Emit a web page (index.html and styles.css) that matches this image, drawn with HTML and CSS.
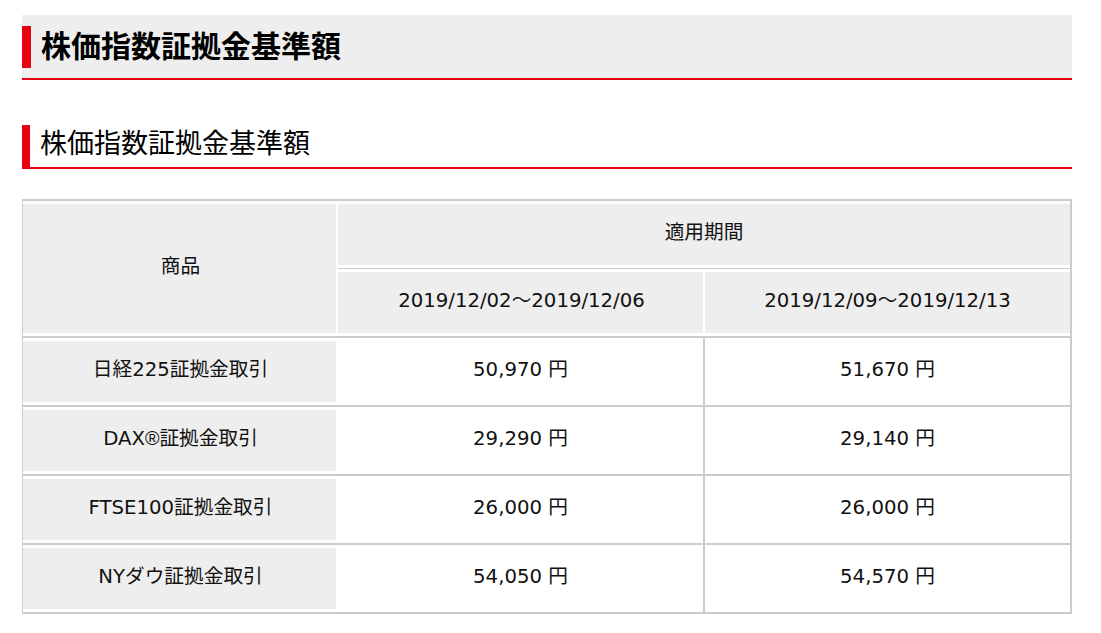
FILE: index.html
```html
<!DOCTYPE html>
<html lang="ja">
<head>
<meta charset="utf-8">
<title>株価指数証拠金基準額</title>
<link rel="stylesheet" href="styles.css">
</head>
<body>
<div class="page">
  <h1 class="title"><span class="title-bar">株価指数証拠金基準額</span></h1>
  <h2 class="subtitle"><span class="subtitle-bar">株価指数証拠金基準額</span></h2>
  <table class="margin-table">
    <colgroup>
      <col class="col-name">
      <col class="col-a">
      <col class="col-b">
    </colgroup>
    <thead>
      <tr class="head-row1">
        <th class="h-name" rowspan="2">商品</th>
        <th class="h-period" colspan="2">適用期間</th>
      </tr>
      <tr class="head-row2">
        <th class="h-date h-date-a">2019/12/02～2019/12/06</th>
        <th class="h-date">2019/12/09～2019/12/13</th>
      </tr>
    </thead>
    <tbody>
      <tr>
        <th class="b-name">日経225証拠金取引</th>
        <td class="b-val b-val-a">50,970 円</td>
        <td class="b-val">51,670 円</td>
      </tr>
      <tr>
        <th class="b-name">DAX<span class="reg">®</span>証拠金取引</th>
        <td class="b-val b-val-a">29,290 円</td>
        <td class="b-val">29,140 円</td>
      </tr>
      <tr>
        <th class="b-name">FTSE100証拠金取引</th>
        <td class="b-val b-val-a">26,000 円</td>
        <td class="b-val">26,000 円</td>
      </tr>
      <tr>
        <th class="b-name">NYダウ証拠金取引</th>
        <td class="b-val b-val-a">54,050 円</td>
        <td class="b-val">54,570 円</td>
      </tr>
    </tbody>
  </table>
</div>
</body>
</html>
```

FILE: styles.css
```css
html, body {
  margin: 0;
  padding: 0;
  background: #fff;
}

body {
  font-family: "DejaVu Sans", "Noto Sans CJK JP", sans-serif;
  color: #111;
}

.page {
  padding: 15px 29px 0 22px;
}

.title {
  margin: 0;
  background: #eeeeee;
  border-bottom: 2px solid #e60012;
  padding: 11px 0 10px 0;
  font-family: "Noto Sans CJK JP", sans-serif;
  font-size: 30px;
  font-weight: bold;
  color: #000;
}

.title-bar {
  display: block;
  border-left: 9px solid #e60012;
  padding: 0 0 5px 10px;
  line-height: 37px;
}

.subtitle {
  margin: 45px 0 0 0;
  border-bottom: 2px solid #e60012;
  font-family: "Noto Sans CJK JP", sans-serif;
  font-size: 27px;
  font-weight: normal;
  color: #000;
}

.subtitle-bar {
  display: block;
  border-left: 8px solid #e60012;
  padding: 0 0 9px 10px;
  line-height: 33px;
}

.margin-table {
  margin-top: 30px;
  width: 1050px;
  table-layout: fixed;
  border-collapse: separate;
  border-spacing: 0;
  border-top: 2px solid #cccccc;
  border-left: 1px solid #cccccc;
  border-right: 2px solid #cccccc;
  border-bottom: 2px solid #cccccc;
  font-size: 19.7px;
}

.col-name { width: 315px; }
.col-a { width: 367px; }
.col-b { width: 365px; }

.margin-table th,
.margin-table td {
  box-sizing: border-box;
  padding: 0 0 4px 0;
  text-align: center;
  vertical-align: middle;
  font-weight: normal;
  line-height: 24px;
}

.reg {
  font-family: "Liberation Sans", sans-serif;
}

.head-row1 { height: 68px; }
.head-row2 { height: 67px; }
.margin-table tbody tr { height: 69px; }

.margin-table th {
  background: #eeeeee;
}

.h-name {
  box-shadow: inset 0 3px #fff, inset 0 -3px #fff, inset -2px 0 #fff;
}

.h-period {
  border-bottom: 1px solid #cccccc;
  box-shadow: inset 0 3px #fff, inset 0 -3px #fff;
}

.h-date {
  box-shadow: inset 0 3px #fff, inset 0 -3px #fff;
}

.h-date-a {
  box-shadow: inset 0 3px #fff, inset 0 -3px #fff, inset -2px 0 #fff;
}

.b-name {
  border-top: 2px solid #cccccc;
  box-shadow: inset 0 3px #fff, inset 0 -3px #fff, inset -2px 0 #fff;
}

.b-val {
  background: #fff;
  border-top: 2px solid #cccccc;
}

.b-val-a {
  border-right: 2px solid #cccccc;
}
```
